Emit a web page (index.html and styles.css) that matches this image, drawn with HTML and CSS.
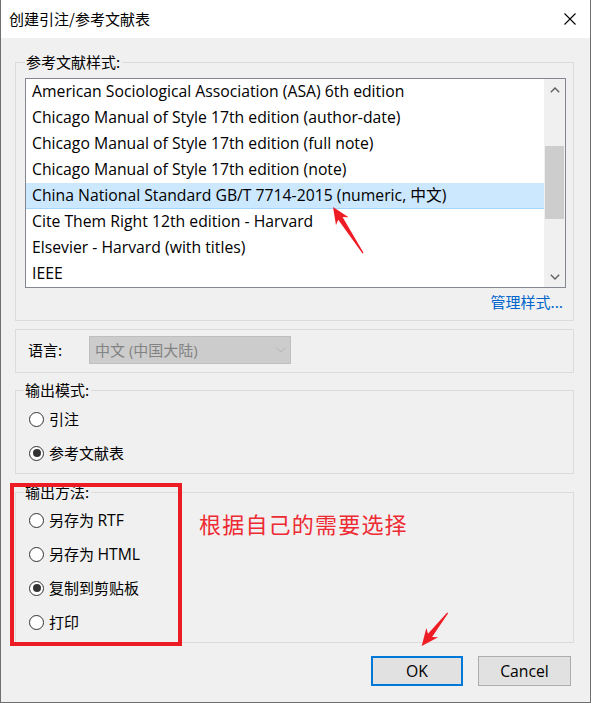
FILE: index.html
```
<!DOCTYPE html>
<html lang="zh-CN">
<head>
<meta charset="utf-8">
<title>创建引注/参考文献表</title>
<link rel="stylesheet" href="styles.css">
</head>
<body>
<div class="window">
  <div class="titlebar">
    <span class="title">创建引注/参考文献表</span>
    <svg class="close" width="12" height="12" viewBox="0 0 12 12"><path d="M0.5 0.5L11.5 11.5M11.5 0.5L0.5 11.5" stroke="#000" stroke-width="1.1" fill="none"/></svg>
  </div>
  <div class="content">
    <fieldset class="group g-style">
      <legend>参考文献样式:</legend>
      <div class="listbox">
        <ul class="items">
          <li>American Sociological Association (ASA) 6th edition</li>
          <li>Chicago Manual of Style 17th edition (author-date)</li>
          <li>Chicago Manual of Style 17th edition (full note)</li>
          <li>Chicago Manual of Style 17th edition (note)</li>
          <li class="sel">China National Standard GB/T 7714-2015 (numeric, 中文)</li>
          <li>Cite Them Right 12th edition - Harvard</li>
          <li>Elsevier - Harvard (with titles)</li>
          <li>IEEE</li>
        </ul>
        <div class="scrollbar">
          <div class="sb-btn"><svg width="10" height="6" viewBox="0 0 10 6"><path d="M0.8 5.2L5 1L9.2 5.2" stroke="#606060" stroke-width="1.4" fill="none"/></svg></div>
          <div class="sb-track"><div class="sb-thumb"></div></div>
          <div class="sb-btn"><svg width="10" height="6" viewBox="0 0 10 6"><path d="M0.8 0.8L5 5L9.2 0.8" stroke="#606060" stroke-width="1.4" fill="none"/></svg></div>
        </div>
      </div>
      <div class="manage"><a class="link">管理样式...</a></div>
    </fieldset>

    <div class="lang">
      <span class="lang-label">语言:</span>
      <div class="select">
        <span>中文 (中国大陆)</span>
        <svg width="10" height="6" viewBox="0 0 10 6"><path d="M0.5 0.8L5 5L9.5 0.8" stroke="#b4b4b4" stroke-width="1" fill="none"/></svg>
      </div>
    </div>

    <fieldset class="group g-radio g-mode">
      <legend>输出模式:</legend>
      <div class="radios">
        <label class="row"><span class="radio"></span><span class="txt">引注</span></label>
        <label class="row"><span class="radio on"></span><span class="txt">参考文献表</span></label>
      </div>
    </fieldset>

    <fieldset class="group g-radio g-method">
      <legend>输出方法:</legend>
      <div class="radios">
        <label class="row"><span class="radio"></span><span class="txt">另存为 <span class="latin">RTF</span></span></label>
        <label class="row"><span class="radio"></span><span class="txt">另存为 <span class="latin">HTML</span></span></label>
        <label class="row"><span class="radio on"></span><span class="txt">复制到剪贴板</span></label>
        <label class="row"><span class="radio"></span><span class="txt">打印</span></label>
      </div>
    </fieldset>

    <div class="buttons">
      <button class="btn default">OK</button>
      <button class="btn">Cancel</button>
    </div>
  </div>

  <div class="note-box"></div>
  <div class="note-text">根据自己的需要选择</div>
  <svg class="arrows" width="591" height="703" viewBox="0 0 591 703">
    <polygon transform="translate(333 207) rotate(56.9)" points="0,0 17,-7.5 13.5,-2.6 55,-0.6 55,0.6 13.5,2.6 17,7.5" fill="#ee1c25"/>
    <polygon transform="translate(421.7 646) rotate(-51.8)" points="0,0 17,-7.5 13.5,-2.6 42,-0.6 42,0.6 13.5,2.6 17,7.5" fill="#ee1c25"/>
  </svg>
</div>
</body>
</html>
```
FILE: styles.css
```
html, body {
  margin: 0;
  padding: 0;
}
body {
  width: 591px;
  height: 703px;
  overflow: hidden;
  background: #f0f0f0;
}
.window {
  position: relative;
  width: 591px;
  height: 703px;
  box-sizing: border-box;
  border: 1px solid #6f6f6f;
  border-top: none;
  background: #f0f0f0;
  display: flex;
  flex-direction: column;
  font-family: "Open Sans", "Noto Sans CJK SC", sans-serif;
  font-size: 15px;
  line-height: 20px;
  color: #000;
}
.titlebar {
  height: 38px;
  flex: none;
  background: #fff;
  display: flex;
  align-items: center;
  justify-content: space-between;
  padding: 0 14px 0 8px;
}
.title {
  font-family: "Noto Sans CJK SC", sans-serif;
  font-size: 15px;
}
.close { display: block; }

.content {
  padding: 14px 16px 0 14px;
  display: flex;
  flex-direction: column;
}
.group {
  margin: 0;
  border: 1px solid #dcdcdc;
  min-width: 0;
}
.group legend {
  padding: 0 2px 0 1px;
  line-height: 20px;
  font-family: "Noto Sans CJK SC", sans-serif;
}
.g-style {
  padding: 6px 7px 8px 9px;
}
.listbox {
  display: flex;
  height: 210px;
  box-sizing: border-box;
  border: 1px solid #828790;
  background: #fff;
}
.items {
  flex: 1;
  list-style: none;
  margin: 0;
  padding: 0;
  min-width: 0;
  font-size: 15.75px;
}
.items li {
  height: 26px;
  line-height: 24px;
  padding-left: 6px;
  white-space: nowrap;
  overflow: hidden;
}
.items li.sel {
  background: #cce8ff;
  box-shadow: inset 0 -1px #a6d5fb;
}
.scrollbar {
  width: 21px;
  flex: none;
  background: #f0f0f0;
  display: flex;
  flex-direction: column;
}
.sb-btn {
  height: 21px;
  display: flex;
  align-items: center;
  justify-content: center;
}
.sb-track {
  flex: 1;
}
.sb-thumb {
  margin: 46px 1px 0;
  height: 73px;
  background: #cdcdcd;
}
.manage {
  margin-top: 4px;
  text-align: right;
  padding-right: 3px;
}
.link {
  color: #0066cc;
  font-family: "Noto Sans CJK SC", sans-serif;
}

.lang {
  margin-top: 8px;
  border: 1px solid #dcdcdc;
  padding: 6px 0 8px 12px;
  display: flex;
  align-items: center;
}
.lang-label {
  width: 61px;
  font-family: "Noto Sans CJK SC", sans-serif;
}
.select {
  width: 202px;
  height: 28px;
  box-sizing: border-box;
  border: 1px solid #bfbfbf;
  background: #cccccc;
  color: #838383;
  display: flex;
  align-items: center;
  justify-content: space-between;
  padding: 0 4px 0 5px;
}
.select svg { display: block; }

.g-radio {
  padding: 7px 0 8px 8px;
}
.g-mode { margin-top: 7px; }
.g-method { margin-top: 8px; padding-top: 6px; }
.radios {
  display: flex;
  flex-direction: column;
  gap: 10px;
  padding-left: 5px;
}
.row {
  height: 24px;
  display: flex;
  align-items: center;
  gap: 5px;
  font-family: "Noto Sans CJK SC", sans-serif;
}
.txt {
  white-space: nowrap;
}
.latin {
  font-family: "Open Sans", sans-serif;
  font-size: 15.75px;
}
.radio {
  width: 15px;
  height: 15px;
  box-sizing: border-box;
  border: 1px solid #333;
  border-radius: 50%;
  background: #fff;
  display: flex;
  align-items: center;
  justify-content: center;
}
.radio.on::after {
  content: "";
  width: 8px;
  height: 8px;
  border-radius: 50%;
  background: #333;
}

.buttons {
  margin-top: 13px;
  display: flex;
  justify-content: flex-end;
  gap: 15px;
  padding-right: 3px;
}
.btn {
  height: 30px;
  box-sizing: border-box;
  background: #e1e1e1;
  border: 1px solid #adadad;
  font-family: "Open Sans", sans-serif;
  font-size: 15.75px;
  color: #000;
  padding: 0;
  width: 93px;
}
.btn.default {
  width: 92px;
  border: 2px solid #0078d7;
}

.note-box {
  position: absolute;
  left: 9px;
  top: 483px;
  width: 172px;
  height: 163px;
  box-sizing: border-box;
  border: 4px solid #ed1c24;
}
.note-text {
  position: absolute;
  left: 198px;
  top: 508px;
  line-height: 30px;
  font-size: 22px;
  letter-spacing: 1.2px;
  color: #ee2a33;
  font-family: "Noto Sans CJK SC", sans-serif;
}
.arrows {
  position: absolute;
  left: -1px;
  top: 0;
  pointer-events: none;
}
```
